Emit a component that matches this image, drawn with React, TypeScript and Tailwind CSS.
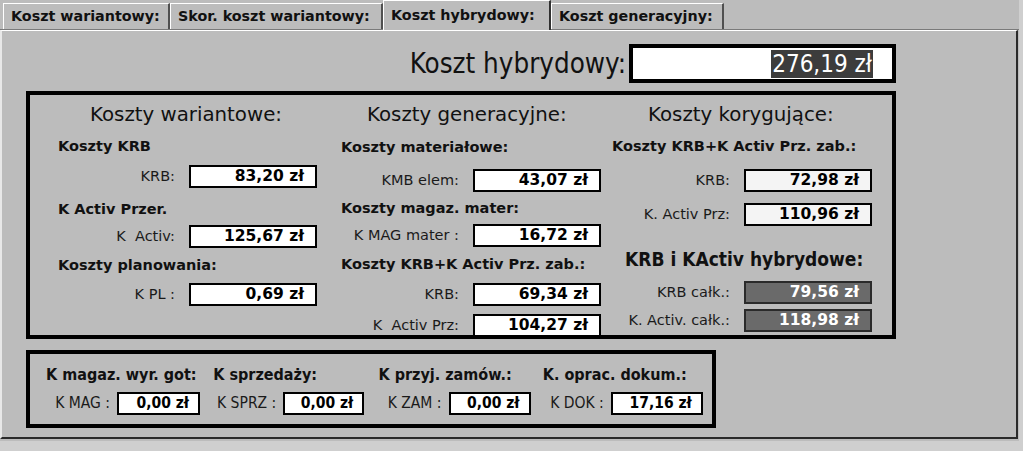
import React from 'react';

const font = { fontFamily: '"DejaVu Sans", Verdana, sans-serif' };
const narrow = { fontFamily: '"DejaVu Sans Condensed", "DejaVu Sans", sans-serif' };

type Tone = 'white' | 'light' | 'dark';

const Field: React.FC<{ label: string; value: string; labelW: number; tone?: Tone; mt: number }> = ({
  label,
  value,
  labelW,
  tone = 'white',
  mt,
}) => {
  const box =
    tone === 'dark'
      ? 'bg-[#6a6a6a] border-[#2a2a2a] text-white'
      : tone === 'light'
        ? 'bg-[#f4f4f4] border-black text-black'
        : 'bg-white border-black text-black';
  return (
    <div className="flex items-center" style={{ marginTop: mt }}>
      <div className="whitespace-pre text-right text-[14.5px] text-[#1a1a1a]" style={{ width: labelW }}>
        {label}
      </div>
      <div
        className={`ml-[14px] flex h-[23px] w-[128px] items-center justify-end border-2 pr-[11px] text-[15.5px] font-bold ${box}`}
      >
        {value}
      </div>
    </div>
  );
};

const Sub: React.FC<{ children: React.ReactNode; ml: number; mt: number }> = ({ children, ml, mt }) => (
  <div
    className="flex h-[18px] items-center whitespace-nowrap text-[14.5px] font-bold text-[#111]"
    style={{ marginLeft: ml, marginTop: mt }}
  >
    {children}
  </div>
);

const Heading: React.FC<{ children: React.ReactNode; ml: number }> = ({ children, ml }) => (
  <div className="mt-[8px] flex h-[24px] items-center text-[19.8px] text-[#111]" style={{ marginLeft: ml }}>
    {children}
  </div>
);

const tabs = ['Koszt wariantowy:', 'Skor. koszt wariantowy:', 'Koszt hybrydowy:', 'Koszt generacyjny:'];
const tabWidths = [167, 213, 168, 173];

const BottomGroup: React.FC<{ title: string; label: string; value: string; w: number; labelW: number; boxW: number }> = ({
  title,
  label,
  value,
  w,
  labelW,
  boxW,
}) => (
  <div style={{ width: w }}>
    <div className="flex h-[18px] items-center whitespace-nowrap text-[16px] font-bold text-[#111]">{title}</div>
    <div className="mt-[8px] flex items-center">
      <div className="text-right text-[15.5px] text-[#1a1a1a]" style={{ width: labelW }}>
        {label}
      </div>
      <div
        className="ml-[7px] flex h-[23px] items-center justify-end border-2 border-black bg-white pr-[9px] text-[15.5px] font-bold"
        style={{ width: boxW }}
      >
        {value}
      </div>
    </div>
  </div>
);

export default function App() {
  return (
    <div className="h-[451px] w-[1023px] overflow-hidden bg-[#cfcfcf]" style={font}>
      <div className="h-[441px] w-[1019px] bg-[#bcbcbc]">
        {/* tab strip */}
        <div className="flex h-[29px] items-end pl-[3px]">
          {tabs.map((t, i) => {
            const active = i === 2;
            return (
              <div
                key={t}
                className={`flex items-center whitespace-nowrap pl-[7px] text-[14.3px] font-bold text-[#111] ${
                  active
                    ? 'relative z-10 -mb-[1px] h-[30px] border-l border-t border-white border-r-2 border-r-[#303030] bg-[#bcbcbc]'
                    : 'h-[26px] border-l border-t border-white border-r-2 border-r-[#505050]'
                }`}
                style={{ width: tabWidths[i] }}
              >
                {t}
              </div>
            );
          })}
        </div>

        {/* tab panel */}
        <div className="h-[410px] border-t border-t-[#7a7a7a]">
          <div className="h-[409px] w-[1018px] border-l-2 border-t border-l-[#e8e8e8] border-t-white border-r-2 border-b-2 border-r-[#2a2a2a] border-b-[#2a2a2a]">
            <div className="ml-[24px] w-[870px]">
              <div className="mt-[12px] flex items-center justify-end">
                <div className="mr-[3px] text-[27.5px] text-[#111]" style={narrow}>
                  Koszt hybrydowy:
                </div>
                <div className="flex h-[39px] w-[267px] items-center justify-end border-4 border-black bg-white pr-[19px]">
                  <span className="bg-[#3c3c3c] px-[1px] text-[24px] leading-[28px] text-white" style={narrow}>
                    276,19 zł
                  </span>
                </div>
              </div>

              <div className="mt-[7px] flex h-[248px] border-4 border-black">
                <div className="flex w-[305px] flex-col">
                  <Heading ml={60}>Koszty wariantowe:</Heading>
                  <Sub ml={28} mt={11}>Koszty KRB</Sub>
                  <Field label="KRB:" value="83,20 zł" labelW={145} mt={9} />
                  <Sub ml={28} mt={13}>K Activ Przer.</Sub>
                  <Field label="K  Activ:" value="125,67 zł" labelW={145} mt={6} />
                  <Sub ml={28} mt={9}>Koszty planowania:</Sub>
                  <Field label="K PL :" value="0,69 zł" labelW={145} mt={8} />
                </div>
                <div className="flex w-[270px] flex-col">
                  <Heading ml={32}>Koszty generacyjne:</Heading>
                  <Sub ml={6} mt={12}>Koszty materiałowe:</Sub>
                  <Field label="KMB elem:" value="43,07 zł" labelW={124} mt={12} />
                  <Sub ml={6} mt={8}>Koszty magaz. mater:</Sub>
                  <Field label="K MAG mater :" value="16,72 zł" labelW={124} mt={6} />
                  <Sub ml={6} mt={9}>Koszty KRB+K Activ Prz. zab.:</Sub>
                  <Field label="KRB:" value="69,34 zł" labelW={124} mt={9} />
                  <Field label="K  Activ Prz:" value="104,27 zł" labelW={124} mt={8} />
                </div>
                <div className="flex flex-1 flex-col">
                  <Heading ml={43}>Koszty korygujące:</Heading>
                  <Sub ml={7} mt={11}>Koszty KRB+K Activ Prz. zab.:</Sub>
                  <Field label="KRB:" value="72,98 zł" labelW={125} tone="light" mt={13} />
                  <Field label="K. Activ Prz:" value="110,96 zł" labelW={125} tone="light" mt={11} />
                  <div
                    className="ml-[20px] mt-[21px] flex h-[24px] items-center whitespace-nowrap text-[19px] font-bold text-[#111]"
                    style={narrow}
                  >
                    KRB i KActiv hybrydowe:
                  </div>
                  <Field label="KRB całk.:" value="79,56 zł" labelW={125} tone="dark" mt={10} />
                  <Field label="K. Activ. całk.:" value="118,98 zł" labelW={125} tone="dark" mt={5} />
                </div>
              </div>

              <div className="mt-[11px] flex h-[78px] w-[690px] border-4 border-black pl-[16px] pt-[12px]" style={narrow}>
                <BottomGroup title="K magaz. wyr. got:" label="K MAG :" value="0,00 zł" w={168} labelW={64} boxW={83} />
                <BottomGroup title="K sprzedaży:" label="K SPRZ :" value="0,00 zł" w={166} labelW={63} boxW={81} />
                <BottomGroup title="K przyj. zamów.:" label="K ZAM :" value="0,00 zł" w={165} labelW={63} boxW={82} />
                <BottomGroup title="K. oprac. dokum.:" label="K DOK :" value="17,16 zł" w={170} labelW={61} boxW={92} />
              </div>
            </div>
          </div>
        </div>
      </div>
    </div>
  );
}
